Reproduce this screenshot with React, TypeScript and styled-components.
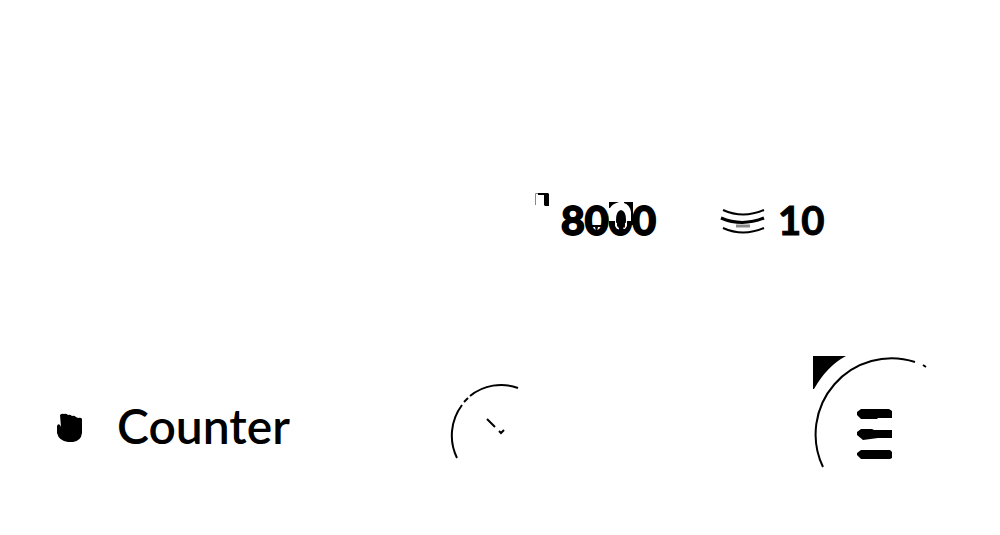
import React from "react";
import styled, { createGlobalStyle } from "styled-components";

const GlobalStyle = createGlobalStyle`
  * { box-sizing: border-box; }
  body { margin: 0; background: #fff; color: #000; font-family: Lato, "Liberation Sans", sans-serif; }
`;

const Page = styled.main`
  padding: 192px 0 64px;
  display: grid;
  gap: 108px;
`;

const StatsRow = styled.section`
  display: grid;
  grid-template-columns: 720fr 280fr;
  align-items: start;
`;

const Stat = styled.div<{ $end?: boolean }>`
  display: flex;
  align-items: flex-start;
  justify-content: ${(p) => (p.$end ? "flex-end" : "flex-start")};
  gap: 12px;
  padding-right: ${(p) => (p.$end ? 64 : 0)}px;
`;

const Value = styled.span<{ $heavy?: boolean }>`
  position: relative;
  font-size: ${(p) => (p.$heavy ? 41 : 40)}px;
  line-height: 56px;
  font-weight: 700;
  -webkit-text-stroke: ${(p) => (p.$heavy ? 2 : 1)}px #000;
`;

const DigitShade = styled.svg`
  position: absolute;
  left: -1px;
  top: 0;
`;

const Drawing = styled.svg<{ $top?: number }>`
  display: block;
  flex: none;
  margin-top: ${(p) => p.$top ?? 0}px;
`;

const ActionsRow = styled.section`
  display: grid;
  grid-template-columns: 450fr 363fr 187fr;
  align-items: start;
`;

const Title = styled.div`
  display: flex;
  align-items: center;
  gap: 33px;
  padding: 38px 0 0 56px;
`;

const Heading = styled.h1`
  margin: 0;
  font-size: 48px;
  line-height: 64px;
  font-weight: 600;
`;

const IconButton = styled.button`
  display: block;
  justify-self: start;
  padding: 0;
  border: 0;
  background: none;
  color: inherit;
  cursor: pointer;
`;

export default function App() {
  return (
    <>
      <GlobalStyle />
      <Page>
        <StatsRow>
          <Stat $end>
            <Drawing width="15" height="16" viewBox="0 0 15 16" aria-hidden="true">
              <path d="M1.500 13V1.5H5" fill="none" stroke="#888" />
              <path d="M4 1h10l1 1v12h-4l-1-1V3H4z" />
            </Drawing>
            <Value $heavy>
              8000
              <DigitShade width="98" height="56" viewBox="0 0 98 56" aria-hidden="true">
                <path d="M49 10h24v21H49z" fill="#fff" />
                <path d="M49 10h10Q52 12 50 16H49zM64 10h9v21h-2V20q-1-7-7-9zM49 29h6v4h-6zM67 29h6v4h-6z" />
                <path d="M61 18q5 1 5 10 0 6-3 8v4h-4v-4q-3-2-3-8 0-9 5-10z" />
                <path d="M31 33h12v2h-5l-1 4h-1l-1-4h-4z" />
                <path d="M55 31h2v4l2 2h-2l-2-3zm10 0h2v3l-2 3h-2l2-2z" fill="#fff" />
              </DigitShade>
            </Value>
          </Stat>
          <Stat>
            <Drawing $top={16} width="46" height="30" viewBox="0 0 46 30" aria-hidden="true">
              <path d="M3 2q20 9 41 0M3 20q20 9 41 0" fill="none" stroke="#000" strokeWidth="2" />
              <path d="M16 18h14" stroke="#888" strokeWidth="3" />
              <path d="M1 10q21 9 43 0" fill="none" stroke="#000" strokeWidth="3" />
            </Drawing>
            <Value>10</Value>
          </Stat>
        </StatsRow>
        <ActionsRow>
          <Title>
            <Drawing width="28" height="32" viewBox="0 0 28 32" aria-hidden="true">
              <path d="M4 5Q6 3 8 4q2-1 4 1 2-1 4 1 2-1 4 1l2 1q3-1 4 1v14q-1 8-9 9h-5Q3 31 1 23V16q1-3 3-1l1 2z" />
            </Drawing>
            <Heading>Counter</Heading>
          </Title>
          <IconButton aria-label="Timer">
            <Drawing width="72" height="112" viewBox="0 0 72 112" aria-hidden="true">
              <g fill="none" stroke="#000">
                <path d="M7 102A51 51 0 0 1 12 49" strokeWidth="2" />
                <path d="M14 46l4-4" strokeWidth="2" />
                <path d="M20 40A49 49 0 0 1 68 32" strokeWidth="2" />
                <path d="M37 63l8 8M49 75l2 2 3-3" strokeWidth="2" />
              </g>
            </Drawing>
          </IconButton>
          <IconButton aria-label="Menu">
            <Drawing width="115" height="112" viewBox="0 0 115 112" aria-hidden="true">
              <path d="M0 0h33Q14 10 1 33H0z" />
              <path d="M10 111A76 76 0 0 1 102 6M110 9l3 2" fill="none" stroke="#000" strokeWidth="2" />
              <path d="M48 53h28l3 2v7H65l-1 1H48l-4-4v-3zM48 73h11l2 1h18v8H65l-15 2-6-5v-3zM48 94h29l2 2v6l-2 1H48l-4-4v-2z" />
            </Drawing>
          </IconButton>
        </ActionsRow>
      </Page>
    </>
  );
}
